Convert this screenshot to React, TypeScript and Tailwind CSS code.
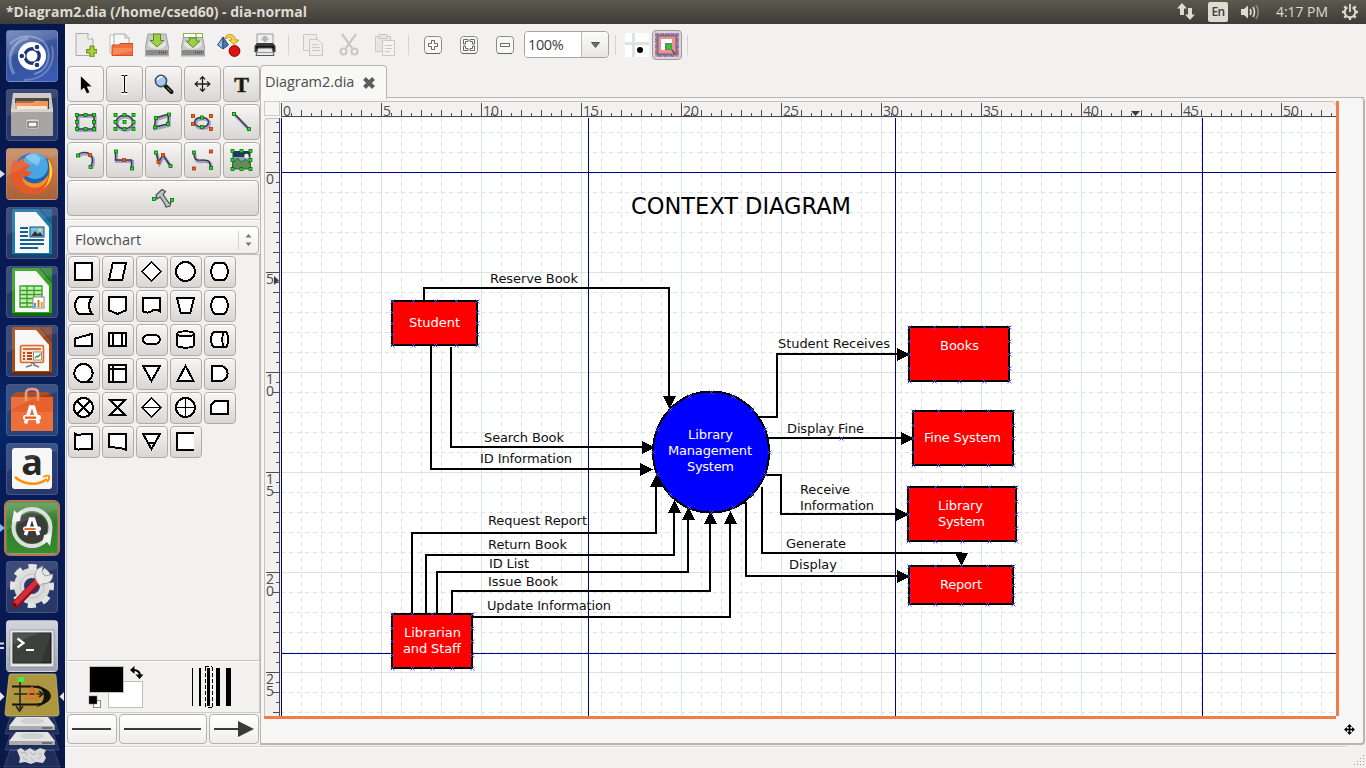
import React from "react";

type P = { children?: React.ReactNode };

const UI = "font-['Open_Sans','Noto_Sans',sans-serif]";

/* ---------- shared pieces ---------- */

function Dots({ g = [], o = [] }: { g?: number[][]; o?: number[][] }) {
  const sq = (p: number[], fill: string, stroke: string, k: string) => (
    <rect key={k} x={p[0] - 1.5} y={p[1] - 1.5} width={3} height={3} fill={fill} stroke={stroke} strokeWidth={0.8} />
  );
  return (
    <g>
      {g.map((p, i) => sq(p, "#16ee16", "#0c6a0c", "g" + i))}
      {o.map((p, i) => sq(p, "#ff5a14", "#a33608", "o" + i))}
    </g>
  );
}

function Stroke({ d }: { d: string }) {
  return (
    <g fill="none">
      <path d={d} stroke="#4a4ab0" strokeWidth={3.2} opacity={0.45} transform="translate(1 1.5)" />
      <path d={d} stroke="#3a3a3a" strokeWidth={1.4} />
    </g>
  );
}

const frame8 = (w: number, h: number) => [
  [-w, -h], [0, -h], [w, -h], [-w, 0], [w, 0], [-w, h], [0, h], [w, h],
];

const tools: React.ReactNode[] = [
  <path key="a" d="M-5 -8.5 V7 L-1.6 4 L1.2 9.8 L4.4 8.4 L1.8 2.8 H6.8 Z" fill="#000" stroke="#fff" strokeWidth={0.7} />,
  <g key="b">
    <path d="M-3 -9 H3 M-3 9 H3 M0 -9 V9" stroke="#fff" strokeWidth={3.4} />
    <path d="M-3 -8.5 H-.5 M.5 -8.5 H3 M-3 8.5 H-.5 M.5 8.5 H3 M0 -8.5 V8.5" stroke="#000" strokeWidth={1.1} />
  </g>,
  <g key="c">
    <path d="M2 2 L8 8" stroke="#111" strokeWidth={4} strokeLinecap="round" />
    <path d="M3.5 3.5 L7.5 7.5" stroke="#c9a24a" strokeWidth={1} />
    <circle cx={-2.5} cy={-3} r={5.6} fill="#a9c9ec" stroke="#3f4f66" strokeWidth={1.6} />
    <path d="M-6 -4 A4 4 0 0 1 -1 -7" stroke="#fff" strokeWidth={1.5} fill="none" />
  </g>,
  <g key="d" fill="none" stroke="#1c1c1c" strokeWidth={1.3}>
    <path d="M0 -7 V7 M-7 0 H7" />
    <path d="M-2.6 -4.6 L0 -7.3 L2.6 -4.6 M-2.6 4.6 L0 7.3 L2.6 4.6 M-4.6 -2.6 L-7.3 0 L-4.6 2.6 M4.6 -2.6 L7.3 0 L4.6 2.6" />
  </g>,
  <text key="e" x={0} y={7.5} textAnchor="middle" fontSize={22} fontWeight={700} fontFamily="Liberation Serif, serif" fill="#15140a" stroke="#3a3214" strokeWidth={0.6}>T</text>,
  <g key="f"><Stroke d="M-8.5 -7 H8.5 V7 H-8.5 Z" /><Dots g={frame8(8.5, 7)} /></g>,
  <g key="g"><Stroke d="M-8.5 0 A8.5 6.7 0 0 1 8.5 0 A8.5 6.7 0 0 1 -8.5 0" /><Dots g={[...frame8(9, 7), [0, 0]]} /></g>,
  <g key="h"><Stroke d="M-8 -4 L5 -8 L4.5 2 L-9 5 Z" /><Dots g={[[-7.5, -4], [5.5, -7.5], [4.5, 2], [-8.5, 5.5]]} /></g>,
  <g key="i"><Stroke d="M-8 0 C-7 -6 6 -6 6 0 C6 7 -8 6 -8 0" /><Dots g={[[-0.5, -4.5], [-0.5, 5]]} o={[[-9.5, -6], [8.5, -6], [-9.5, 2], [8.5, 7]]} /></g>,
  <g key="j"><Stroke d="M-7 -8 L7.5 7" /><Dots g={[[-7.5, -8], [7.5, 7]]} /></g>,
  <g key="k"><Stroke d="M-8 -5 C-4 -9 3 -8 5 -5 C8 -2 7 3 5 7" /><Dots g={[[-7.5, -4.5], [5, 7]]} o={[[4.5, -5]]} /></g>,
  <g key="l"><Stroke d="M-9 -8.5 V0 H7 V8.5" /><Dots g={[[-8.5, -8.5], [7.5, 8.5]]} o={[[-0.5, 0]]} /></g>,
  <g key="m"><Stroke d="M-7.5 -7.5 L-5 2 L-0.5 -5 L7 6" /><Dots g={[[-7.5, -7.5], [7, 6]]} o={[[-5, 2], [-0.5, -5]]} /></g>,
  <g key="n"><Stroke d="M-8.5 -7.5 C-8.5 2 -4 0 0 0 C6 0 8 1 8 8" /><Dots g={[[-8.5, -7.5], [8.5, 8]]} o={[[8.5, -8.5], [-8.5, 8.5]]} /></g>,
  <g key="o">
    <rect x={-9} y={-9} width={18} height={17.5} fill="#1e3a5f" />
    <rect x={-9} y={-3} width={18} height={5} fill="#8fa9b4" />
    <path d="M-9 3 L-4 -2 L0 2 L4 -1 L9 4 V9 H-9 Z" fill="#5f8f58" stroke="#2e4a2e" strokeWidth={0.8} />
    <circle cx={5} cy={-4} r={2.3} fill="#f5f2d8" />
    <Dots g={frame8(9, 9)} />
  </g>,
];

/* ---------- flowchart sheet ---------- */

const shapes: string[] = [
  "M3 3 H21 V21 H3 Z",
  "M7 3 H21 L17 21 H3 Z",
  "M12 2 L22 12 L12 22 L2 12 Z",
  "M12 2 A10 10 0 1 1 11.9 2",
  "M7 3 H17 C22 8 22 16 17 21 H7 C2 16 2 8 7 3 Z",
  "M7 3 H21 C17 8 17 16 21 21 H7 C2 17 2 7 7 3 Z",
  "M3 3 H21 V17 L12 21 L3 17 Z",
  "M3 4 H21 V18 C17 16 14 16 12 18 C9 20 6 20 3 18 Z",
  "M3 4 H21 L17 20 H7 Z",
  "M7 3 H17 C22 8 22 16 17 21 H7 C2 16 2 8 7 3 Z",
  "M3 11 L21 6 V19 H3 Z",
  "M3 5 H21 V19 H3 Z M7 5 V19 M17 5 V19",
  "M8 7.5 H16 C22.5 7.5 22.5 16.5 16 16.5 H8 C1.5 16.5 1.5 7.5 8 7.5 Z",
  "M3 6 C3 2.5 21 2.5 21 6 V18 C21 21.5 3 21.5 3 18 Z M3 6 C3 9.5 21 9.5 21 6",
  "M6 4 H18 C22 4 22 20 18 20 H6 C2 17 2 7 6 4 Z M18 4 C14 4 14 20 18 20",
  "M12 21 H22 M12 2 A9.6 9.6 0 1 1 11.9 2",
  "M3 3 H21 V21 H3 Z M7 3 V21 M3 7 H21",
  "M3 4 H21 L12 20 Z",
  "M12 4 L20.5 20 H3.5 Z",
  "M4 4 H13 C23 4 23 20 13 20 H4 Z",
  "M12 2 A10 10 0 1 1 11.9 2 M5 5 L19 19 M19 5 L5 19",
  "M4 4 H20 L4 20 H20 Z",
  "M12 2 L22 12 L12 22 L2 12 Z M2 12 H22",
  "M12 2 A10 10 0 1 1 11.9 2 M12 2 V22 M2 12 H22",
  "M7 5 H21 V19 H3 V9 Z",
  "M3 4 C8 7 14 2 21 4 V20 C15 18 9 22 3 20 Z",
  "M3 4 H21 V21 C14 17 10 19 3 18 Z",
  "M3 4 H21 L12 20 Z M8 14 H16",
  "M21 3.5 H3.5 V20.5 H21",
];

/* ---------- launcher ---------- */

function DocIcon({ c, dark, children }: P & { c: string; dark: string }) {
  return (
    <g>
      <path d="M8 2 H33 L46 17 V48 Q46 50 44 50 H8 Q6 50 6 48 V4 Q6 2 8 2 Z" fill={dark} />
      <path d="M8 2 H33 L46 17 V47 H6 V4 Q6 2 8 2 Z" fill={c} />
      <path d="M9 5 H30 L43 20 V46 H9 Z" fill="#f7f7f7" />
      <path d="M34 2 H46 V16 Z" fill={c} opacity={0.75} />
      {children}
    </g>
  );
}

const launcher: { bg: string; icon: React.ReactNode; mark?: string }[] = [
  {
    bg: "bg-[linear-gradient(160deg,#6f83b8,#35529c_45%,#3a5cb4)]",
    icon: (
      <g fill="none">
        <path d="M4 14 C14 2 38 4 42 20 C45 32 38 42 28 44" stroke="#fff" opacity={0.3} strokeWidth={2} />
        <path d="M8 44 C0 30 4 12 22 8" stroke="#fff" opacity={0.3} strokeWidth={3} />
        <path d="M18 50 C40 50 50 34 46 16" stroke="#fff" opacity={0.25} strokeWidth={2} />
        <circle cx={26} cy={26} r={14} fill="#fff" />
        <circle cx={26} cy={26} r={7.2} stroke="#1f3775" strokeWidth={3.4} />
        <g stroke="#fff" strokeWidth={1.4} fill="#1f3775">
          <circle cx={15.8} cy={26} r={3} /><circle cx={31} cy={17} r={3} /><circle cx={31} cy={35} r={3} />
        </g>
      </g>
    ),
  },
  {
    bg: "bg-[#ffffff22]",
    icon: (
      <g>
        <path d="M7 4 H45 L47 20 H5 Z" fill="#c9c8c6" /><path d="M9 9 H43 V20 H9 Z" fill="#3c3833" />
        <path d="M10 12 H42 V20 H10 Z" fill="#b5582a" /><path d="M9 14 H27 L29 12 H42 V21 H9 Z" fill="#f0955a" />
        <path d="M11 17 H41 V21 H11 Z" fill="#fbe6d2" />
        <rect x={5} y={20} width={42} height={27} rx={1} fill="#a7a6a4" /><path d="M5 20 H47 V23 H5 Z" fill="#d5d4d2" />
        <rect x={20} y={30} width={13} height={10} rx={2} fill="#dcdbd9" stroke="#888" strokeWidth={0.6} />
        <rect x={22} y={33} width={9} height={5} fill="#f6f6f6" stroke="#444" strokeWidth={1} />
      </g>
    ),
  },
  {
    bg: "bg-[linear-gradient(#c48a62,#a86236)]",
    mark: "l",
    icon: (
      <g>
        <circle cx={27} cy={25} r={20} fill="#1f63b3" /><circle cx={29} cy={18} r={13} fill="#49a5e4" />
        <path d="M30 6 Q38 12 31 18 Q25 14 19 9 Q24 4 30 6" fill="#9bd5f6" opacity={0.6} />
        <path d="M8 12 C10 14 12 14 14 12 C17 9 18 10 18 14 C25 15 25 20 19 22 C21 24 23 24 26 23 C24 30 18 28 17 29 C22 38 36 38 42 27 C45 20 44 12 39 6 C50 14 51 32 41 41 C29 52 9 46 5 31 C3 23 5 16 8 12 Z" fill="#e2592a" />
        <path d="M42 11 C49 19 48 34 37 41 C44 34 45 23 42 11 Z" fill="#f9d43a" />
        <path d="M17 29 C22 38 36 38 42 27 C42 37 31 43 22 38 C18 36 16 32 17 29" fill="#f49428" />
      </g>
    ),
  },
  {
    bg: "bg-[#ffffff22]",
    icon: (
      <DocIcon c="#1a76a8" dark="#0a4a74">
        <path d="M14 21 H22 M14 25 H22 M14 29 H22 M14 33 H38 M14 37 H38 M14 41 H32" stroke="#14638f" strokeWidth={2} />
        <rect x={24} y={20} width={14} height={10} fill="#7cc3ea" stroke="#0d4e78" /><path d="M25 29 L29 24 L32 27 L34 25 L37 29 Z" fill="#333" /><circle cx={34} cy={23} r={1.5} fill="#ffe14d" />
      </DocIcon>
    ),
  },
  {
    bg: "bg-[#ffffff22]",
    icon: (
      <DocIcon c="#35a022" dark="#106a0c">
        <path d="M14 20 H36 V41 H14 Z" fill="#c8efb8" /><path d="M14 20 H36 V41 H14 Z M14 24.5 H36 M14 28.5 H36 M14 32.5 H36 M14 37 H36 M21 20 V41 M28 20 V41" stroke="#35a022" strokeWidth={1.3} fill="none" />
        <rect x={27} y={31} width={11} height={11} fill="#fff" stroke="#888" /><path d="M29 41 V37" stroke="#3b9ade" strokeWidth={2} /><path d="M32.5 41 V34" stroke="#e07020" strokeWidth={2} /><path d="M35.7 41 V36" stroke="#e0a020" strokeWidth={2} />
      </DocIcon>
    ),
  },
  {
    bg: "bg-[#ffffff22]",
    icon: (
      <DocIcon c="#a24c1e" dark="#6b2a0a">
        <rect x={14.5} y={20.5} width={23} height={17} rx={1.5} fill="#fae3d0" stroke="#d96a2c" strokeWidth={1.6} />
        <path d="M17 24 H35" stroke="#d0591c" strokeWidth={1.6} /><path d="M17 28 H19 M17 31 H19 M17 34 H19 M21 28 H26 M21 31 H26 M21 34 H26" stroke="#b0481a" strokeWidth={1.8} />
        <rect x={27.5} y={27} width={8} height={8} fill="#fff" stroke="#777" strokeWidth={0.8} /><path d="M29 33 L31 31 L32 32 L34.5 29" stroke="#25a025" fill="none" strokeWidth={1.2} />
        <path d="M25 38 H28 V40 L33 42 M26 40 L20 42" stroke="#777" fill="none" strokeWidth={1.6} />
      </DocIcon>
    ),
  },
  {
    bg: "bg-[#ffffff22]",
    icon: (
      <g>
        <path d="M5 13 L10 8 H42 L47 13 Z" fill="#9c3c16" />
        <path d="M5 13 H47 V47 H5 Z" fill="#ef6f3a" /><path d="M5 13 H47 V28 H5 Z" fill="#e8602c" />
        <path d="M20 17 V9 Q20 5 26 5 Q32 5 32 9 V17" fill="none" stroke="#f09068" strokeWidth={2.6} />
        <path d="M19.5 39.5 L24.5 23 H27.5 L32.5 39.5" fill="none" stroke="#fff" strokeWidth={3.6} />
        <rect x={17} y={31} width={18} height={5} rx={2} fill="#fff" /><rect x={19} y={32.5} width={11} height={2.3} fill="#ea5a20" />
      </g>
    ),
  },
  {
    bg: "bg-[#ffffff22]",
    icon: (
      <g>
        <rect x={6} y={5} width={40} height={41} rx={3} fill="#f7f7f7" />
        <text x={26} y={32} textAnchor="middle" fontSize={36} fontWeight={700} fontFamily="Open Sans, sans-serif" fill="#262626">a</text>
        <path d="M9 34 C18 42 32 43 41 36" fill="none" stroke="#ff9100" strokeWidth={2.6} /><path d="M37 34 Q42 32 43 33 Q44 36 41 39" fill="none" stroke="#ff9100" strokeWidth={1.8} />
      </g>
    ),
  },
  {
    bg: "bg-[linear-gradient(#5f9a55,#2f7a2a_40%,#3a8a30)] ring-2 ring-[#b9754f]",
    mark: "b",
    icon: (
      <g>
        <circle cx={26} cy={26} r={15.5} fill="#3c3b39" />
        <circle cx={26} cy={25.5} r={18.5} fill="none" stroke="#dedede" strokeWidth={4} />
        <path d="M6 20 L8 8 L11 11 L16 8 L14 19 Z" fill="#f2f2f2" /><path d="M46 31 L44 44 L41 40 L36 43 L38 33 Z" fill="#f2f2f2" />
        <path d="M19.5 33 L24.5 17 H27.5 L32.5 33" fill="none" stroke="#fff" strokeWidth={3.6} />
        <rect x={17} y={24.5} width={18} height={4.5} rx={2} fill="#fff" /><rect x={18.5} y={26} width={11} height={2} fill="#ef6524" />
      </g>
    ),
  },
  {
    bg: "bg-[#ffffff22]",
    icon: (
      <g>
        <circle cx={26} cy={25} r={13} fill="none" stroke="#dadada" strokeWidth={10} />
        <circle cx={26} cy={25} r={19.5} fill="none" stroke="#e4e4e4" strokeWidth={5} strokeDasharray="8.3 7.015" strokeDashoffset={4.15} />
        <circle cx={26} cy={25} r={12} fill="none" stroke="#bdbdbd" strokeWidth={1} />
        <path d="M10 43 L32 20" stroke="#8e0f1c" strokeWidth={8} strokeLinecap="round" /><path d="M10 42 L32 19" stroke="#d22f3a" strokeWidth={5} strokeLinecap="round" />
        <path d="M31 21 L29 17 Q28 8 37 5 L36 11 L39 15 L47 13 Q47 23 36 23 L34 25 Z" fill="#e7e7e7" stroke="#8a8a8a" strokeWidth={0.8} />
        <circle cx={9} cy={43.5} r={1.5} fill="#5a0a12" />
      </g>
    ),
  },
  {
    bg: "bg-[linear-gradient(#cdd0da,#a0a4b2)]",
    mark: "=",
    icon: (
      <g>
        <rect x={4} y={10} width={44} height={37} rx={1} fill="#e6e6e6" stroke="#777" strokeWidth={0.6} />
        <rect x={7} y={13} width={38} height={30} fill="#333533" stroke="#111" /><path d="M7 13 H45 L35 43 H7 Z" fill="#4a4c4a" opacity={0.5} />
        <path d="M11.5 18.5 L17.500 23 L11.5 27.5" fill="none" stroke="#fff" strokeWidth={2.2} /><path d="M20 30 H28" stroke="#fff" strokeWidth={2} />
      </g>
    ),
  },
];

function Launcher() {
  return (
    <aside className="flex h-full w-[65px] shrink-0 flex-col overflow-hidden bg-[linear-gradient(#06174c,#081c57_45%,#06296a_53%,#071b58_62%,#081848)]">
      <div className="flex flex-col gap-[7px] pt-[6px]">
        {launcher.map((l, i) => (
          <div key={i} className="flex h-[52px] items-center">
            <svg width="6" height="14" viewBox="0 0 6 14" className="shrink-0">
              {l.mark === "l" && <path d="M0 3 L5 7 L0 11 Z" fill="#dcdce4" />}
              {l.mark === "b" && <path d="M0 3 L5 7 L0 11 Z" fill="#6fc0f0" />}
              {l.mark === "=" && <path d="M0 4.5 H4 M0 9 H4" stroke="#dcdce4" strokeWidth={2} />}
            </svg>
            <div className={"h-[52px] w-[52px] rounded-[4px] border border-white/15 " + l.bg}>
              <svg width="50" height="50" viewBox="1 1 50 50" className="overflow-visible">{l.icon}<path d="M1 1 H51 V8 Q30 12 1 28 Z" fill="#fff" opacity={0.1} /></svg>
            </div>
          </div>
        ))}
      </div>
      <svg width="65" height="96" viewBox="0 672 65 96" className="shrink-0">
        <path d="M0 692 L4.5 696.5 L0 701 Z M64 692 L59.5 696.5 L64 701 Z" fill="#e8e8ec" />
        <path d="M11 674 H54 Q56 674 56 676 L59 713 Q59 716 57 716 H7 Q5 716 5 713 L9 676 Q9 674 11 674 Z" fill="#ac9640" stroke="#d0c078" strokeWidth={0.7} />
        <path d="M12 686.5 H30 C45 687 50 692 50 696 C50 701 43 704 36 704.5 H12" fill="none" stroke="#15130c" strokeWidth={1.8} />
        <path d="M36 685 C54 690 54 703 36 707 C47 701 46 691 36 685" fill="#15130c" />
        <path d="M20 682 V709 M16 706 L19.5 711 L23 706 M14 694 H42 M39 691 L43 694 L39 697" stroke="#2a2618" strokeWidth={1.6} fill="none" />
        <path d="M32 688 L38 698.500 H26 Z" fill="none" stroke="#ee6a1c" strokeWidth={2.2} /><rect x={18} y={677} width={6} height={5} fill="#3cf04a" />
        <g fill="#ffffff18" stroke="#ffffff30" strokeWidth={0.8}><path d="M10 717 H54 L59 734 H5 Z" /><path d="M10 735 H54 L59 750 H5 Z" /><path d="M10 750 H54 L60 767 H4 Z" /></g>
        {[717, 732].map((y) => (
          <g key={y}><path d={`M16 ${y} H48 L55 ${y + 9} H9 Z`} fill="#e4e4e4" /><path d={`M9 ${y + 9} H55 V${y + 13} H9 Z`} fill="#aaa" /><ellipse cx={32} cy={y + 4} rx={12} ry={3} fill="#cfcfcf" /><path d={`M42 ${y + 11} H52`} stroke="#333" /></g>
        ))}
        <path d="M17 750 L21 748 L25 751 L30 748 L35 751 L40 748 L46 750 L44 754 L46 758 L43 763 L36 762 L31 764 L25 762 L19 763 L20 758 Z" fill="#d9d9dc" />
        <path d="M21 753 L25 752 L27 756 M23 758 L27 760 M30 752 L33 755 L36 753 M31 758 L34 761 M39 753 L42 755 M38 759 L41 757" stroke="#b2b2ba" fill="none" />
      </svg>
    </aside>
  );
}

/* ---------- toolbar ---------- */

const Svg = ({ children }: P) => <svg width="24" height="24" viewBox="0 0 24 24" className="shrink-0">{children}</svg>;
const Disk = () => (
  <g>
    <path d="M3 1 H21 L24 17 V23 H0 V17 Z" fill="#c8c8c8" stroke="#888" strokeWidth={0.7} /><path d="M1 17 H23 V22 H1 Z" fill="#8a8a8a" />
    <ellipse cx={12} cy={11} rx={9} ry={5} fill="#e4e4e4" /><path d="M14 19.5 H21" stroke="#444" strokeWidth={1.4} strokeDasharray="1 1" />
  </g>
);
const Sep = () => <div className="h-5 w-px shrink-0 bg-[#d6d4d0]" />;

function ZoomBtn({ d }: { d: string }) {
  return (
    <svg width="18" height="18" viewBox="0 0 18 18" className="shrink-0">
      <rect x={0.5} y={0.5} width={17} height={17} rx={3} fill="#f8f8f7" stroke="#8c8b88" /><path d="M2 17.5 H16" stroke="#666" />
      <path d={d} fill="#fff" stroke="#676765" />
    </svg>
  );
}

function Toolbar() {
  return (
    <div className="flex h-[41px] shrink-0 items-center bg-[#f2f1f0] pl-[8px]">
      <div className="flex gap-3">
        <Svg>
          <path d="M3 .5 H15 L20 6 V22.5 H3 Z" fill="#ececea" stroke="#aaa" /><path d="M15 .5 V6 H20" fill="#fff" stroke="#aaa" />
          <path d="M17 13 H21 V16.5 H24 V20 H21 V24 H17 V20 H13.5 V16.5 H17 Z" fill="#a6cf3a" stroke="#5e8b12" />
        </Svg>
        <Svg>
          <path d="M1 2 H7 L8 4 V20 H1 Z" fill="#fff" stroke="#bbb" /><path d="M5 1 H16 L20 5 V14 H5 Z" fill="#f6f6f6" stroke="#aaa" /><path d="M16 1 V5 H20" fill="none" stroke="#aaa" />
          <path d="M3 12 H10 L11 10.5 H24 V22.5 H3 Z" fill="#f0703c" stroke="#d2501c" /><path d="M4 15 H23 V18 L4 22 Z" fill="#f9a27c" opacity={0.5} />
        </Svg>
        <Svg><Disk /><path d="M8.5 1 H15.5 V7.5 H19 L12 14 L5 7.5 H8.5 Z" fill="#9fce4c" stroke="#5a8a14" /></Svg>
        <Svg><Disk /><rect x={2.5} y={0.5} width={19} height={4} fill="#fff" stroke="#8fae50" /><path d="M15 1 V4" stroke="#7aa030" /><path d="M8.5 5 H15.5 V8 H19 L12 14.5 L5 8 H8.5 Z" fill="#9fce4c" stroke="#5a8a14" /></Svg>
        <Svg>
          <path d="M6 4 L.5 12 L6 16 Z" fill="#9dbde0" stroke="#2c4a78" /><path d="M6 4 L11.5 12 L6 16 Z" fill="#4a78b4" stroke="#2c4a78" />
          <path d="M8 5 C9 0 18 0 18.5 7 H22 L17 11.5 L12 7 H15 C14 3 11 4 10 5.5 Z" fill="#f5d73a" stroke="#a88a10" strokeWidth={0.8} />
          <circle cx={17.5} cy={18} r={5.4} fill="#dc1414" stroke="#8a0000" />
        </Svg>
        <Svg>
          <path d="M4 1 H20 V12 H4 Z" fill="#eee" stroke="#9a9a9a" /><path d="M10 3 H14 V5.5 H16.5 L12 9.5 L7.5 5.5 H10 Z" fill="#b4b4b4" />
          <path d="M4 10 H20 L22.5 13 V19 H1.5 V13 Z" fill="#3a3a3a" /><path d="M3 13 H21 V16 H3 Z" fill="#111" /><path d="M5 15 H19 L21 22.5 H3 Z" fill="#e8e8e8" stroke="#555" /><path d="M2 19.5 H22" stroke="#999" />
        </Svg>
      </div>
      <div className="pl-[11px] pr-[12px]"><Sep /></div>
      <div className="flex gap-3 text-[#c9c8c6]">
        <Svg><g fill="#efeeed" stroke="currentColor"><path d="M2.5 1.5 H15.5 V17.5 H2.5 Z" /><path d="M8.5 6.5 H17 L21.5 11 V22.5 H8.5 Z" /><path d="M11 11.5 H17 M11 14.5 H19 M11 17.5 H19" /></g></Svg>
        <Svg><g fill="none" stroke="currentColor" strokeWidth={2.2}><path d="M5 1 L15 15 M19 1 L9 15" /><circle cx={6.5} cy={18.5} r={3} /><circle cx={17.5} cy={18.5} r={3} /></g></Svg>
        <Svg><g fill="#e7e6e4" stroke="currentColor"><path d="M2.5 3.5 H17.5 V18.5 H2.5 Z" /><path d="M6 1.5 H14 V5.5 H6 Z" /><path d="M9.5 7.5 H21.5 V22.5 H9.5 Z" fill="#f4f3f2" /><path d="M12 12.5 H19 M12 15.5 H19 M12 18.5 H17" /></g></Svg>
      </div>
      <div className="pl-[11px] pr-[15px]"><Sep /></div>
      <div className="flex gap-[18px]">
        <ZoomBtn d="M7.5 4.5 H10.5 V7.5 H13.5 V10.5 H10.5 V13.5 H7.5 V10.5 H4.5 V7.5 H7.5 Z" />
        <ZoomBtn d="M3.5 3.5 H8 V5.5 H5.5 V8 H3.5 Z M14.5 3.5 H10 V5.5 H12.5 V8 H14.5 Z M3.5 14.5 H8 V12.5 H5.5 V10 H3.5 Z M14.5 14.5 H10 V12.5 H12.5 V10 H14.5 Z" />
        <ZoomBtn d="M4.5 7.5 H13.5 V10.5 H4.5 Z" />
      </div>
      <div className={"ml-[10px] flex h-[27px] w-[85px] shrink-0 overflow-hidden rounded-[4px] border border-[#a5a39e] text-[14.5px] leading-[25px] text-[#3c3c3c] " + UI}>
        <div className="w-[57px] border-r border-[#bdbbb6] bg-white pl-[3px] tracking-[-0.4px]">100%</div>
        <div className="flex flex-1 items-center justify-center bg-gradient-to-b from-[#fbfbfa] to-[#e8e6e4]">
          <svg width="9" height="6" viewBox="0 0 9 6"><path d="M.5 .5 H8.5 L4.5 5.5 Z" fill="#6d6d6b" stroke="#555" /></svg>
        </div>
      </div>
      <div className="pl-[6px] pr-[9px]"><Sep /></div>
      <Svg><rect width={24} height={24} fill="#fff" /><path d="M8.5 0 V24 M0 10.5 H24" stroke="#dbe6e4" strokeWidth={3} /><circle cx={15} cy={17} r={3} fill="#000" /></Svg>
      <div className="ml-[3px] flex h-[30px] w-[30px] shrink-0 items-center justify-center rounded-[4px] border border-[#9d9b97] bg-[#d9d7d5]">
        <Svg>
          <rect width={24} height={24} fill="#f08f8f" /><rect x={2.5} y={2.5} width={19} height={19} fill="none" stroke="#777" strokeWidth={2.2} />
          <path d="M0 0 L3 3 M3 0 L0 3 M6 0 L9 3 M9 0 L6 3 M11 0 L14 3 M14 0 L11 3 M16 0 L19 3 M19 0 L16 3 M21 0 L24 3 M24 0 L21 3 M0 6 L3 9 M3 6 L0 9 M0 12 L3 15 M3 12 L0 15 M0 18 L3 21 M3 18 L0 21 M21 6 L24 9 M24 6 L21 9 M21 12 L24 15 M24 12 L21 15 M21 18 L24 21 M24 18 L21 21 M3 21 L6 24 M6 21 L3 24 M9 21 L12 24 M12 21 L9 24 M15 21 L18 24 M18 21 L15 24" stroke="#5a5aff" strokeWidth={0.9} />
          <rect x={6} y={6} width={11} height={11} fill="#fff" /><rect x={10} y={10} width={7} height={7} fill="#777" /><path d="M11.5 11.5 L16 16 M16 11.5 L11.5 16" stroke="#12e012" strokeWidth={2} /><path d="M17 17 L20 21" stroke="#555" strokeWidth={1.5} />
        </Svg>
      </div>
      <div className="pl-[5px]"><Sep /></div>
    </div>
  );
}

/* ---------- tool box ---------- */

const btn = "flex items-center justify-center rounded-[4px] border border-[#aeaca7] bg-gradient-to-b from-[#f7f6f5] to-[#d9d6d3] shadow-[inset_0_1px_0_#fff]";

function Toolbox() {
  return (
    <section className="flex w-[195px] shrink-0 flex-col bg-[#f2f1f0]">
      <div className="grid grid-cols-[repeat(5,37px)] gap-x-[2px] gap-y-[2px] pl-[2px] pt-[1px]">
        {tools.map((t, i) => (
          <div key={i} className={btn + " h-9 w-[37px]" + (i === 0 ? " border-[#94928d] from-[#dfddda] to-[#efedeb]" : "")}>
            <svg width="26" height="26" viewBox="-12.5 -13 26 26">{t}</svg>
          </div>
        ))}
        <div className={btn + " col-span-5 h-9 w-[192px]"}>
          <svg width="26" height="26" viewBox="-13 -13 26 26">
            <path d="M-7 -3 L-1 -8.5 L2.500 -6.5 L0 -3.5 L6 5 L8 4.5 L7 8 L3 9 L1.500 5.5 L-3 -1 L-6 1 Z" fill="#b9c4c4" stroke="#4a5252" strokeWidth={1.2} />
            <Dots g={[[-9, 1], [9, 2]]} />
          </svg>
        </div>
      </div>
      <div className="mt-[3px] h-[2px] border-t border-[#d3d0cb] bg-white" />
      <div className="ml-[2px] mt-[5px] flex h-[28px] w-[192px] items-center rounded-[4px] border border-[#b5b3ae] bg-gradient-to-b from-white to-[#f0efed]">
        <span className={"flex-1 pl-[7px] text-[14.5px] leading-none text-[#4c4c4c] " + UI}>Flowchart</span>
        <span className="h-[19px] w-px bg-[#d5d3cf]" />
        <svg width="19" height="14" viewBox="0 0 19 14"><path d="M6.5 4.5 H12.5 L9.5 1 Z M6.5 9.5 H12.5 L9.5 13 Z" fill="#777572" /></svg>
      </div>
      <div className="ml-[1px] h-[407px] border border-[#c5c2bd]">
        <div className="grid grid-cols-[repeat(5,32px)] gap-[2px] pl-[1px] pt-[1px]">
          {shapes.map((d, i) => (
            <div key={i} className={btn + " h-8 w-8"}>
              <svg width="24" height="24" viewBox="0 0 24 24" shapeRendering="crispEdges">
                <path d={d} transform="translate(0.167 0.167) scale(0.9444)" fill="#fff" stroke="#000" strokeWidth={2.1} />
              </svg>
            </div>
          ))}
        </div>
      </div>
      <div className="ml-[1px] flex h-[52px] items-start border border-t-white border-[#d0cdc8]">
        <svg width="192" height="49" viewBox="67 662 192 49">
          <rect x={108.5} y={681.5} width={34} height={26} fill="#fff" stroke="#c0beb9" />
          <rect x={89.5} y={666.5} width={34} height={26} fill="#000" stroke="#c0beb9" />
          <path d="M133 670 Q140 670 140 676" fill="none" stroke="#000" strokeWidth={2} /><path d="M130 670 L134.5 666 V674 Z M139.500 679 L135.5 674.5 H143.5 Z" fill="#000" />
          <rect x={93.5} y={700.5} width={7} height={7} fill="#fff" stroke="#888" /><rect x={89} y={696} width={8} height={8} fill="#000" stroke="#777" strokeWidth={0.5} />
          <path d="M192 668 H193 V706 H192 Z M199 668 H201 V706 H199 Z M207 668 H210 V706 H207 Z M216 668 H220 V706 H216 Z M226 668 H231 V706 H226 Z" fill="#000" />
          <path d="M205.5 667 V708 M212.5 667 V708 M205 666.5 H212 M208 707.5 H212" stroke="#000" strokeDasharray="4 2" />
        </svg>
      </div>
      <div className="mt-[1px] flex gap-[2px] pl-[2px]">
        {[50, 88, 50].map((w, i) => (
          <div key={i} style={{ width: w }} className="flex h-[30px] shrink-0 items-center justify-center rounded-[4px] border border-[#b5b3ae] bg-gradient-to-b from-white to-[#efeeec]">
            <svg width={w - 10} height="20" viewBox={`0 0 ${w - 10} 20`}>
              <path d={i < 2 ? `M0 10 H${w - 11}` : "M0 10 H28"} stroke="#3a3a3a" strokeWidth={2} />
              {i === 2 && <path d="M24 2 L40 10 L24 18 Z" fill="#3a3a3a" />}
            </svg>
          </div>
        ))}
      </div>
    </section>
  );
}

/* ---------- diagram ---------- */

const range = (a: number, b: number, s: number) => {
  const r: number[] = [];
  for (let v = a; v <= b; v += s) r.push(v);
  return r;
};

const labels: [string, number, number, number][] = [
  ["Reserve Book", 490, 283, 88], ["Search Book", 484, 442, 80], ["ID Information", 480, 463, 92],
  ["Request Report", 488, 525, 99], ["Return Book", 488, 549, 79], ["ID List", 489, 568, 40],
  ["Issue Book", 488, 586, 70], ["Update Information", 487, 610, 124], ["Student Receives", 778, 348, 112],
  ["Display Fine", 787, 433, 77], ["Receive", 800, 494, 50], ["Information", 800, 510, 74],
  ["Generate", 786, 548, 60], ["Display", 789, 569, 48],
];
const nodeLabels: [string, number, number, number][] = [
  ["Student", 409, 327, 51], ["Librarian", 404, 637, 57], ["and Staff", 403, 653, 58],
  ["Library", 688, 439, 45], ["Management", 668, 455, 84], ["System", 687, 471, 47],
  ["Books", 940, 350, 39], ["Fine System", 924, 442, 77], ["Library", 938, 510, 45], ["System", 938, 526, 47], ["Report", 940, 589, 42],
];
const boxes = [
  [392, 301, 85, 44], [392, 614, 80, 54], [909, 327, 100, 54],
  [913, 411, 100, 54], [908, 487, 108, 54], [909, 566, 104, 38],
];
const wires = [
  "M424 300 V288 H669 V400", "M451 347 V447 H645", "M431 346 V469 H643",
  "M412 614 V533 H656 V485", "M426 614 V555 H674 V510", "M437 614 V572 H688 V518",
  "M452 614 V591 H710 V522", "M472 617 H730 V522", "M759 417 H777 V354 H899",
  "M768 438 H903", "M766 475 H781 V514 H898", "M762 487 V553 H961 V556", "M742 503 L746 503 V576 H899",
];
const heads = [
  "M663 396 H676 L669.5 409 Z", "M642 441 V454 L655 447.5 Z", "M640 463 V476 L653 469.5 Z",
  "M650 487 H663 L656.5 474 Z", "M668 513 H681 L674.5 500 Z", "M682 520 H695 L688.5 507 Z",
  "M704 524 H717 L710.5 511 Z", "M724 524 H737 L730.5 511 Z", "M897 348 V361 L910 354.5 Z",
  "M901 432 V445 L914 438.5 Z", "M896 508 V521 L909 514.5 Z", "M955 553 H968 L961.5 566 Z", "M897 570 V583 L910 576.5 Z",
];

function Marks() {
  const pts: number[][] = [[841, 438]];
  boxes.forEach(([x, y, w, h]) => {
    for (let i = 0; i <= 4; i++) {
      pts.push([x + (w * i) / 4, y], [x + (w * i) / 4, y + h]);
      if (i > 0 && i < 4) pts.push([x, y + (h * i) / 4], [x + w, y + (h * i) / 4]);
    }
  });
  for (let i = 0; i < 16; i++) pts.push([711 + 58 * Math.cos((i * Math.PI) / 8), 451.5 + 60 * Math.sin((i * Math.PI) / 8)]);
  const d = pts.map(([a, b]) => { const x = Math.round(a) + 0.5, y = Math.round(b) + 0.5; return `M${x - 2} ${y - 2} L${x + 2} ${y + 2} M${x + 2} ${y - 2} L${x - 2} ${y + 2}`; }).join(" ");
  return <path d={d} stroke="#5050ff" strokeWidth={0.9} />;
}

function Canvas() {
  return (
    <svg width="1055" height="598" viewBox="281 118 1055 598" className="block bg-white">
      <g stroke="#d8e4e2" shapeRendering="crispEdges">
        {range(301, 1335, 20).map((x) => <path key={"v" + x} d={`M${x + 0.5} 118 V716`} strokeDasharray={(x - 281) % 100 ? "4 4" : undefined} />)}
        {range(132, 715, 20).map((y) => <path key={"h" + y} d={`M281 ${y + 0.5} H1336`} strokeDasharray={(y - 172) % 100 ? "4 4" : undefined} />)}
      </g>
      <path d="M281.5 118 V716 M588.5 118 V716 M895.5 118 V716 M1202.5 118 V716 M281 172.5 H1336 M281 653.5 H1336" stroke="#00008b" shapeRendering="crispEdges" />
      <g stroke="#000" strokeWidth={2} fill="none">
        {wires.map((d) => <path key={d} d={d} />)}
      </g>
      <g stroke="#000" strokeWidth={2} shapeRendering="crispEdges">
        {boxes.map(([x, y, w, h]) => <rect key={x + "-" + y} x={x} y={y} width={w} height={h} fill="#ff0000" />)}
        <ellipse cx={711} cy={452} rx={58} ry={60.5} fill="#0000ff" />
      </g>
      {heads.map((d) => <path key={d} d={d} fill="#000" shapeRendering="crispEdges" />)}
      <Marks />
      <g fontFamily="DejaVu Sans, sans-serif" fontSize={13}>
        <text x={631} y={214} fontSize={22.5} textLength={220}>CONTEXT DIAGRAM</text>
        {labels.map(([t, x, y, w]) => <text key={t} x={x} y={y} textLength={w} fill="#111">{t}</text>)}
        {nodeLabels.map(([t, x, y, w]) => <text key={t + y} x={x} y={y} textLength={w} fill="#fff">{t}</text>)}
      </g>
    </svg>
  );
}

function HRuler() {
  return (
    <svg width="1055" height="17" viewBox="281 101 1055 17" className="block overflow-visible bg-[#f2f1f0]">
      <path d="M281 101.5 H1332 Q1335 101.5 1335.5 105" fill="none" stroke="#c5c2bd" />
      <g stroke="#4c4c4c" shapeRendering="crispEdges">
        <path d="M281 116.5 H1336" />
        {range(281, 1335, 10).map((x) => <path key={x} d={`M${x + 0.5} ${(x - 281) % 100 === 0 ? 103 : (x - 281) % 20 === 0 ? 110 : 113} V116`} />)}
      </g>
      <g className={UI} fontSize={14} fill="#4c4c4c">
        {range(0, 50, 5).map((n) => <text key={n} x={283 + n * 20} y={116} textLength={n > 9 ? 16 : 8.5}>{n}</text>)}
      </g>
      <path d="M1131 111 H1140 L1135.5 116 Z" fill="#3c3c3c" />
    </svg>
  );
}

function VRuler() {
  const chars: [string, number][] = [["0", 184], ["5", 284], ["1", 384], ["0", 396], ["1", 484], ["5", 496], ["2", 584], ["0", 596], ["2", 684], ["5", 696]];
  return (
    <svg width="17" height="598" viewBox="264 118 17 598" className="block bg-[#f2f1f0]">
      <path d="M264.5 716 V121 Q265 118.5 268 118.5 H279" fill="none" stroke="#c5c2bd" />
      <g stroke="#4c4c4c" shapeRendering="crispEdges">
        <path d="M279.5 118 V716" />
        {range(122, 715, 10).map((y) => <path key={y} d={`M${(y - 72) % 100 === 0 ? 266 : (y - 72) % 20 === 0 ? 273 : 276} ${y + 0.5} H279`} />)}
      </g>
      <g className={UI} fontSize={14} fill="#4c4c4c">
        {chars.map(([c, y]) => <text key={y} x={266} y={y}>{c}</text>)}
      </g>
      <path d="M274 276 V285 L279 280.5 Z" fill="#3c3c3c" />
    </svg>
  );
}

function Notebook() {
  return (
    <section className="flex min-w-0 flex-1 flex-col">
      <div className="flex h-[33px]">
        <div className="relative z-10 flex h-[34px] w-[127px] items-center rounded-t-[4px] border border-b-0 border-[#b9b6b0] bg-[#f8f8f7] pl-[4px]">
          <span className={"w-[90px] text-[14.5px] leading-none tracking-[-0.08px] text-[#4c4c4c] " + UI}>Diagram2.dia</span>
          <svg width="14" height="14" viewBox="0 0 14 14" className="ml-[7px]"><path d="M2.5 2.5 L11.5 11.5 M11.5 2.5 L2.5 11.5" stroke="#5e5d5a" strokeWidth={4} /></svg>
        </div>
        <div className="flex-1 border-b border-[#b9b6b0]" />
        <div className="w-[2px]" />
      </div>
      <div className="mr-[1px] flex h-[647px] flex-col rounded-br-[4px] rounded-tr-[4px] border-b-2 border-l border-r-2 border-[#b9b6b0] bg-[#f6f6f6] pl-[3px] pt-[3px]">
        <div className="flex">
          <div className="flex w-[1072px] flex-col">
            <div className="flex">
              <div className="h-[17px] w-[17px] pb-[2px] pr-[1px]"><div className="h-full border border-[#cfccc7] bg-[#f6f6f6]" /></div>
              <HRuler />
            </div>
            <div className="flex"><VRuler /><Canvas /></div>
          </div>
          <div className="w-[3px] bg-[#f27c47]" />
        </div>
        <div className="h-[3px] w-[1072px] bg-[#f27c47]" />
        <svg width="12" height="12" viewBox="0 0 12 12" className="mr-[7px] mt-[5px] self-end"><path d="M5.500 1 V10 M1 5.500 H10" stroke="#000" strokeWidth={1.700} /><path d="M5.500 0 L8 3 H3 Z M5.500 11 L8 8 H3 Z M0 5.500 L3 3 V8 Z M11 5.500 L8 3 V8 Z" fill="#000" /></svg>
      </div>
    </section>
  );
}

/* ---------- top panel ---------- */

function TopBar() {
  return (
    <header className={"flex h-6 shrink-0 items-center bg-gradient-to-b from-[#5c594e] to-[#3d3c38] text-[#dfdbd2] " + UI}>
      <svg width="320" height="24" viewBox="0 0 320 24"><text x={6} y={17} fontSize={14.3} fontWeight={700} textLength={301} lengthAdjust="spacingAndGlyphs" fill="#dfdbd2">*Diagram2.dia (/home/csed60) - dia-normal</text></svg>
      <div className="flex-1" />
      <svg width="18" height="18" viewBox="0 0 18 18"><path d="M5 0 L10 5.5 H7 V12 H3 V5.5 H0 Z M13 17 L18 11.5 H15 V5 H11 V11.5 H8 Z" fill="#dfdbd2" /></svg>
      <div className="ml-[13px] flex h-5 w-5 items-center justify-center rounded-[2px] bg-[#dfdbd2] text-[12px] font-semibold leading-none tracking-[-0.6px] text-[#403f3a]">En</div>
      <svg width="20" height="18" viewBox="0 0 20 18" className="ml-[12px]"><path d="M1 6 H4 L8 2.5 V15.5 L4 12 H1 Z" fill="#dfdbd2" /><path d="M10 6 Q12 9 10 12" stroke="#dfdbd2" strokeWidth={1.6} fill="none" /><path d="M13 4 Q16 9 13 14" stroke="#dfdbd2" strokeWidth={1.6} fill="none" /><path d="M16 2 Q20.5 9 16 16" stroke="#8a877e" strokeWidth={1.6} fill="none" /></svg>
      <svg width="54" height="24" viewBox="0 0 54 24" className="ml-[15px]"><text x={1} y={17} fontSize={14} textLength={52} lengthAdjust="spacingAndGlyphs" fill="#dfdbd2">4:17 PM</text></svg>
      <svg width="18" height="18" viewBox="-9 -9 18 18" className="ml-[12px] mr-[7px]">
        <g fill="none" stroke="#dfdbd2"><path d="M2.5 -4.6 A5.3 5.3 0 1 1 -2.5 -4.6" strokeWidth={2} /><path d="M0 -8 V0" strokeWidth={1.8} />
          <path d="M5.5 0 H8 M-5.5 0 H-8 M0 5.5 V8 M4 4 L5.7 5.7 M-4 4 L-5.7 5.7 M4 -4 L5.7 -5.7 M-4 -4 L-5.7 -5.7" strokeWidth={2.4} /></g>
      </svg>
    </header>
  );
}

export default function App() {
  return (
    <div className="flex h-[768px] w-[1366px] flex-col overflow-hidden bg-[#f2f1f0]">
      <TopBar />
      <div className="flex min-h-0 flex-1">
        <Launcher />
        <main className="flex min-w-0 flex-1 flex-col">
          <Toolbar />
          <div className="flex h-[680px] shrink-0">
            <Toolbox />
            <Notebook />
          </div>
          <footer className="flex flex-1 justify-between">
            <div className="mt-[1px] h-[2px] w-[1282px] border-t border-[#d3d0cb] bg-white" />
            <svg width="12" height="12" viewBox="0 0 12 12" className="mr-px mt-auto mb-[2px]">
              {[[10, 1], [7, 4], [10, 4], [4, 7], [7, 7], [10, 7], [1, 10], [4, 10], [7, 10], [10, 10]].map(([x, y]) => <rect key={x + "," + y} x={x} y={y} width={1} height={1} fill="#a09d98" />)}
            </svg>
          </footer>
        </main>
      </div>
    </div>
  );
}
